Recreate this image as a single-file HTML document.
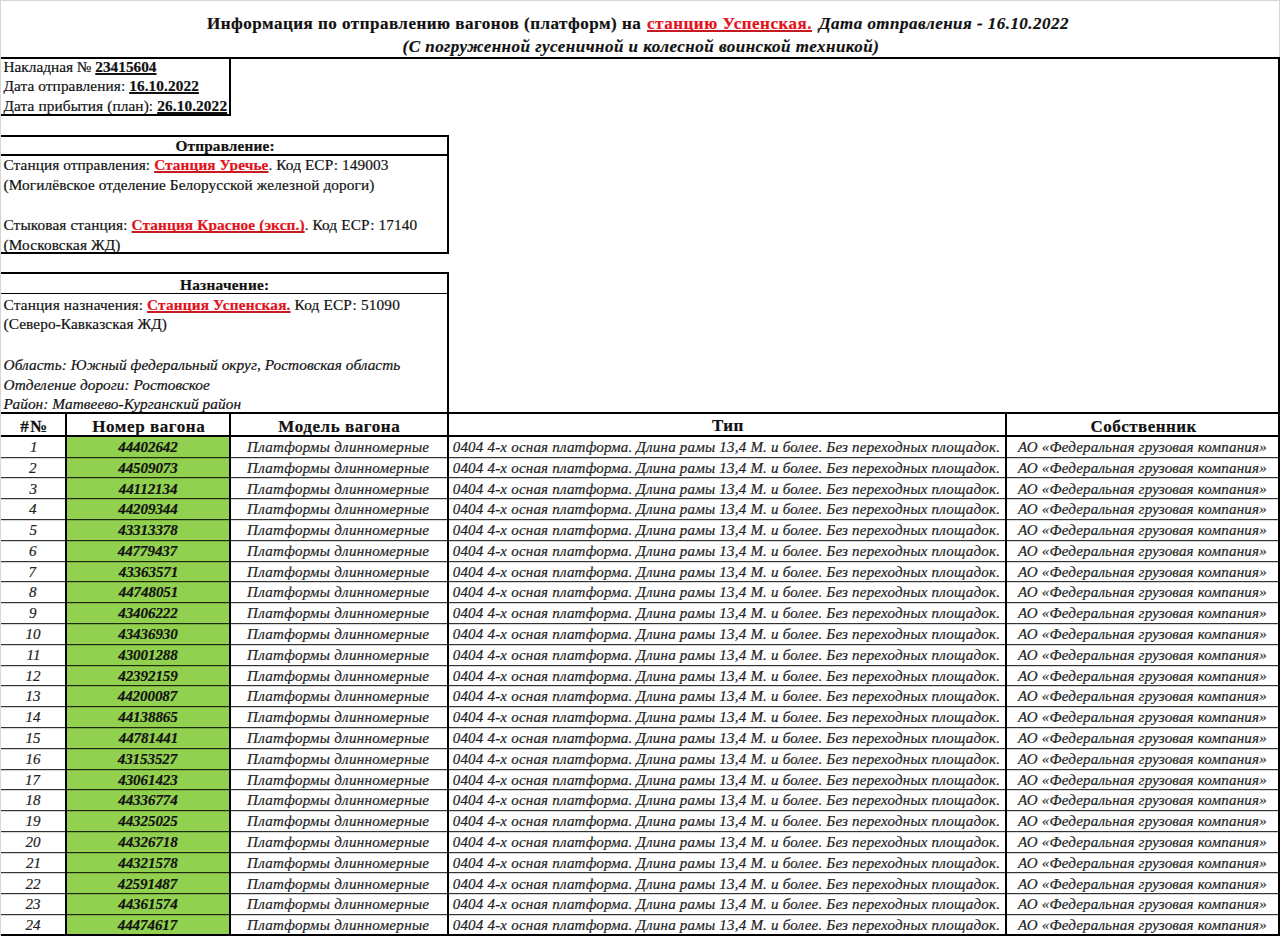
<!DOCTYPE html>
<html><head><meta charset="utf-8"><style>
html,body{margin:0;padding:0;background:#fff;}
body{width:1280px;height:936px;position:relative;overflow:hidden;}

.t{position:absolute;white-space:nowrap;font-family:"Liberation Serif",serif;line-height:1;transform-origin:0 0;-webkit-text-stroke:0.2px currentColor;}
.r{color:#e3121b;font-weight:bold;text-decoration:underline;text-decoration-color:#c41a20;text-decoration-thickness:1.5px;text-underline-offset:0.6px;text-decoration-skip-ink:none;}
.u{text-decoration:underline;text-decoration-thickness:1.5px;text-underline-offset:0.6px;text-decoration-skip-ink:none;}

</style></head><body>
<div style="position:absolute;left:66px;top:436.40px;width:164px;height:499.60px;background:#92d050"></div>
<div style="position:absolute;left:0.00px;top:0.00px;width:1280.00px;height:1.00px;background:#d6d6d6"></div>
<div style="position:absolute;left:0.00px;top:0.00px;width:1.00px;height:936.00px;background:#d6d6d6"></div>
<div style="position:absolute;left:1279.00px;top:0.00px;width:1.00px;height:57.00px;background:#d6d6d6"></div>
<div style="position:absolute;left:1.00px;top:56.50px;width:1279.00px;height:2.00px;background:#000"></div>
<div style="position:absolute;left:1278.00px;top:57.00px;width:2.00px;height:879.00px;background:#000"></div>
<div style="position:absolute;left:228.50px;top:57.00px;width:2.00px;height:58.50px;background:#000"></div>
<div style="position:absolute;left:1.00px;top:113.50px;width:229.50px;height:2.00px;background:#000"></div>
<div style="position:absolute;left:1.00px;top:134.60px;width:448.00px;height:2.00px;background:#000"></div>
<div style="position:absolute;left:1.00px;top:154.00px;width:448.00px;height:1.60px;background:#000"></div>
<div style="position:absolute;left:447.00px;top:135.00px;width:2.00px;height:119.30px;background:#000"></div>
<div style="position:absolute;left:1.00px;top:252.30px;width:448.00px;height:2.00px;background:#000"></div>
<div style="position:absolute;left:1.00px;top:271.80px;width:448.00px;height:2.00px;background:#000"></div>
<div style="position:absolute;left:1.00px;top:292.60px;width:448.00px;height:1.60px;background:#000"></div>
<div style="position:absolute;left:447.00px;top:272.00px;width:2.00px;height:664.00px;background:#000"></div>
<div style="position:absolute;left:1.00px;top:412.30px;width:1279.00px;height:2.00px;background:#000"></div>
<div style="position:absolute;left:1.00px;top:435.40px;width:1279.00px;height:2.00px;background:#000"></div>
<div style="position:absolute;left:65.00px;top:412.30px;width:2.00px;height:523.70px;background:#000"></div>
<div style="position:absolute;left:229.00px;top:412.30px;width:2.00px;height:523.70px;background:#000"></div>
<div style="position:absolute;left:1005.00px;top:412.30px;width:2.00px;height:523.70px;background:#000"></div>
<div style="position:absolute;left:1px;top:457px;width:1279px;height:1px;background:rgba(0,0,0,0.8)"></div>
<div style="position:absolute;left:1px;top:458px;width:1279px;height:1px;background:rgba(0,0,0,0.16)"></div>
<div style="position:absolute;left:1px;top:477px;width:1279px;height:1px;background:rgba(0,0,0,0.8)"></div>
<div style="position:absolute;left:1px;top:478px;width:1279px;height:1px;background:rgba(0,0,0,0.16)"></div>
<div style="position:absolute;left:1px;top:498px;width:1279px;height:1px;background:rgba(0,0,0,0.8)"></div>
<div style="position:absolute;left:1px;top:499px;width:1279px;height:1px;background:rgba(0,0,0,0.16)"></div>
<div style="position:absolute;left:1px;top:519px;width:1279px;height:1px;background:rgba(0,0,0,0.8)"></div>
<div style="position:absolute;left:1px;top:520px;width:1279px;height:1px;background:rgba(0,0,0,0.16)"></div>
<div style="position:absolute;left:1px;top:540px;width:1279px;height:1px;background:rgba(0,0,0,0.8)"></div>
<div style="position:absolute;left:1px;top:541px;width:1279px;height:1px;background:rgba(0,0,0,0.16)"></div>
<div style="position:absolute;left:1px;top:561px;width:1279px;height:1px;background:rgba(0,0,0,0.8)"></div>
<div style="position:absolute;left:1px;top:562px;width:1279px;height:1px;background:rgba(0,0,0,0.16)"></div>
<div style="position:absolute;left:1px;top:581px;width:1279px;height:1px;background:rgba(0,0,0,0.8)"></div>
<div style="position:absolute;left:1px;top:582px;width:1279px;height:1px;background:rgba(0,0,0,0.16)"></div>
<div style="position:absolute;left:1px;top:602px;width:1279px;height:1px;background:rgba(0,0,0,0.8)"></div>
<div style="position:absolute;left:1px;top:603px;width:1279px;height:1px;background:rgba(0,0,0,0.16)"></div>
<div style="position:absolute;left:1px;top:623px;width:1279px;height:1px;background:rgba(0,0,0,0.8)"></div>
<div style="position:absolute;left:1px;top:624px;width:1279px;height:1px;background:rgba(0,0,0,0.16)"></div>
<div style="position:absolute;left:1px;top:644px;width:1279px;height:1px;background:rgba(0,0,0,0.8)"></div>
<div style="position:absolute;left:1px;top:645px;width:1279px;height:1px;background:rgba(0,0,0,0.16)"></div>
<div style="position:absolute;left:1px;top:665px;width:1279px;height:1px;background:rgba(0,0,0,0.8)"></div>
<div style="position:absolute;left:1px;top:666px;width:1279px;height:1px;background:rgba(0,0,0,0.16)"></div>
<div style="position:absolute;left:1px;top:685px;width:1279px;height:1px;background:rgba(0,0,0,0.8)"></div>
<div style="position:absolute;left:1px;top:686px;width:1279px;height:1px;background:rgba(0,0,0,0.16)"></div>
<div style="position:absolute;left:1px;top:706px;width:1279px;height:1px;background:rgba(0,0,0,0.8)"></div>
<div style="position:absolute;left:1px;top:707px;width:1279px;height:1px;background:rgba(0,0,0,0.16)"></div>
<div style="position:absolute;left:1px;top:727px;width:1279px;height:1px;background:rgba(0,0,0,0.8)"></div>
<div style="position:absolute;left:1px;top:728px;width:1279px;height:1px;background:rgba(0,0,0,0.16)"></div>
<div style="position:absolute;left:1px;top:748px;width:1279px;height:1px;background:rgba(0,0,0,0.8)"></div>
<div style="position:absolute;left:1px;top:749px;width:1279px;height:1px;background:rgba(0,0,0,0.16)"></div>
<div style="position:absolute;left:1px;top:769px;width:1279px;height:1px;background:rgba(0,0,0,0.8)"></div>
<div style="position:absolute;left:1px;top:770px;width:1279px;height:1px;background:rgba(0,0,0,0.16)"></div>
<div style="position:absolute;left:1px;top:789px;width:1279px;height:1px;background:rgba(0,0,0,0.8)"></div>
<div style="position:absolute;left:1px;top:790px;width:1279px;height:1px;background:rgba(0,0,0,0.16)"></div>
<div style="position:absolute;left:1px;top:810px;width:1279px;height:1px;background:rgba(0,0,0,0.8)"></div>
<div style="position:absolute;left:1px;top:811px;width:1279px;height:1px;background:rgba(0,0,0,0.16)"></div>
<div style="position:absolute;left:1px;top:831px;width:1279px;height:1px;background:rgba(0,0,0,0.8)"></div>
<div style="position:absolute;left:1px;top:832px;width:1279px;height:1px;background:rgba(0,0,0,0.16)"></div>
<div style="position:absolute;left:1px;top:852px;width:1279px;height:1px;background:rgba(0,0,0,0.8)"></div>
<div style="position:absolute;left:1px;top:853px;width:1279px;height:1px;background:rgba(0,0,0,0.16)"></div>
<div style="position:absolute;left:1px;top:872px;width:1279px;height:1px;background:rgba(0,0,0,0.8)"></div>
<div style="position:absolute;left:1px;top:873px;width:1279px;height:1px;background:rgba(0,0,0,0.16)"></div>
<div style="position:absolute;left:1px;top:893px;width:1279px;height:1px;background:rgba(0,0,0,0.8)"></div>
<div style="position:absolute;left:1px;top:894px;width:1279px;height:1px;background:rgba(0,0,0,0.16)"></div>
<div style="position:absolute;left:1px;top:914px;width:1279px;height:1px;background:rgba(0,0,0,0.8)"></div>
<div style="position:absolute;left:1px;top:915px;width:1279px;height:1px;background:rgba(0,0,0,0.16)"></div>
<div style="position:absolute;left:1.00px;top:934.00px;width:1279.00px;height:2.00px;background:#000"></div>
<div class="t" style="left:207.00px;top:14.76px;font-size:17px;color:#111;font-weight:bold;letter-spacing:0.500px;">Информация по отправлению вагонов (платформ) на</div>
<div class="t" style="left:647.00px;top:14.76px;font-size:17px;color:#111;font-weight:bold;letter-spacing:0.529px;"><span class="r">станцию Успенская.</span></div>
<div class="t" style="left:819.00px;top:14.76px;font-size:17px;color:#111;font-weight:bold;font-style:italic;letter-spacing:0.464px;">Дата отправления - 16.10.2022</div>
<div class="t" style="left:402.50px;top:37.76px;font-size:17px;color:#111;font-weight:bold;font-style:italic;letter-spacing:0.481px;">(С погруженной гусеничной и колесной воинской техникой)</div>
<div class="t" style="left:3.50px;top:58.69px;font-size:15.3px;color:#111;letter-spacing:0.005px;">Накладная № <b class="u">23415604</b></div>
<div class="t" style="left:3.50px;top:78.19px;font-size:15.3px;color:#111;letter-spacing:0.093px;">Дата отправления: <b class="u">16.10.2022</b></div>
<div class="t" style="left:3.50px;top:98.49px;font-size:15.3px;color:#111;letter-spacing:0.113px;">Дата прибытия (план): <b class="u">26.10.2022</b></div>
<div class="t" style="left:175.40px;top:138.19px;font-size:15.3px;color:#111;font-weight:bold;letter-spacing:0.173px;">Отправление:</div>
<div class="t" style="left:3.50px;top:157.29px;font-size:15.3px;color:#111;letter-spacing:0.088px;">Станция отправления: <b class="r">Станция Уречье</b>. Код ЕСР: 149003</div>
<div class="t" style="left:3.60px;top:176.59px;font-size:15.3px;color:#111;letter-spacing:0.103px;">(Могилёвское отделение Белорусской железной дороги)</div>
<div class="t" style="left:3.50px;top:216.59px;font-size:15.3px;color:#111;letter-spacing:0.111px;">Стыковая станция: <b class="r">Станция Красное (эксп.)</b>. Код ЕСР: 17140</div>
<div class="t" style="left:3.60px;top:236.59px;font-size:15.3px;color:#111;letter-spacing:0.100px;">(Московская ЖД)</div>
<div class="t" style="left:180.00px;top:276.69px;font-size:15.3px;color:#111;font-weight:bold;letter-spacing:0.270px;">Назначение:</div>
<div class="t" style="left:3.50px;top:296.94px;font-size:15.3px;color:#111;letter-spacing:0.158px;">Станция назначения: <b class="r">Станция Успенская.</b> Код ЕСР: 51090</div>
<div class="t" style="left:3.60px;top:315.94px;font-size:15.3px;color:#111;letter-spacing:0.081px;">(Северо-Кавказская ЖД)</div>
<div class="t" style="left:3.60px;top:356.59px;font-size:15.3px;color:#111;font-style:italic;letter-spacing:0.059px;">Область: Южный федеральный округ, Ростовская область</div>
<div class="t" style="left:3.60px;top:376.59px;font-size:15.3px;color:#111;font-style:italic;letter-spacing:0.026px;">Отделение дороги: Ростовское</div>
<div class="t" style="left:3.60px;top:396.29px;font-size:15.3px;color:#111;font-style:italic;letter-spacing:0.081px;">Район: Матвеево-Курганский район</div>
<div class="t" style="left:20.20px;top:417.76px;font-size:17px;color:#111;font-weight:bold;letter-spacing:1.400px;">#№</div>
<div class="t" style="left:92.30px;top:417.76px;font-size:17px;color:#111;font-weight:bold;letter-spacing:0.582px;">Номер вагона</div>
<div class="t" style="left:278.30px;top:417.76px;font-size:17px;color:#111;font-weight:bold;letter-spacing:0.567px;">Модель вагона</div>
<div class="t" style="left:712.00px;top:417.26px;font-size:17px;color:#111;font-weight:bold;letter-spacing:0.450px;">Тип</div>
<div class="t" style="left:1090.60px;top:417.76px;font-size:17px;color:#111;font-weight:bold;letter-spacing:0.465px;">Собственник</div>
<div class="t" style="left:30.00px;top:439.94px;font-size:15px;color:#222;font-style:italic;">1</div>
<div class="t" style="left:118.20px;top:439.94px;font-size:15px;color:#111;font-weight:bold;font-style:italic;letter-spacing:-0.057px;">44402642</div>
<div class="t" style="left:247.00px;top:439.94px;font-size:15px;color:#222;font-style:italic;letter-spacing:0.310px;">Платформы длинномерные</div>
<div class="t" style="left:452.70px;top:439.94px;font-size:15px;color:#222;font-style:italic;letter-spacing:0.206px;">0404 4-х осная платформа. Длина рамы 13,4 М. и более. Без переходных площадок.</div>
<div class="t" style="left:1018.00px;top:439.94px;font-size:15px;color:#222;font-style:italic;letter-spacing:0.194px;">АО «Федеральная грузовая компания»</div>
<div class="t" style="left:29.00px;top:460.73px;font-size:15px;color:#222;font-style:italic;">2</div>
<div class="t" style="left:118.20px;top:460.73px;font-size:15px;color:#111;font-weight:bold;font-style:italic;letter-spacing:-0.057px;">44509073</div>
<div class="t" style="left:247.00px;top:460.73px;font-size:15px;color:#222;font-style:italic;letter-spacing:0.310px;">Платформы длинномерные</div>
<div class="t" style="left:452.70px;top:460.73px;font-size:15px;color:#222;font-style:italic;letter-spacing:0.206px;">0404 4-х осная платформа. Длина рамы 13,4 М. и более. Без переходных площадок.</div>
<div class="t" style="left:1018.00px;top:460.73px;font-size:15px;color:#222;font-style:italic;letter-spacing:0.194px;">АО «Федеральная грузовая компания»</div>
<div class="t" style="left:29.50px;top:481.52px;font-size:15px;color:#222;font-style:italic;">3</div>
<div class="t" style="left:118.70px;top:481.52px;font-size:15px;color:#111;font-weight:bold;font-style:italic;letter-spacing:-0.057px;">44112134</div>
<div class="t" style="left:247.00px;top:481.52px;font-size:15px;color:#222;font-style:italic;letter-spacing:0.310px;">Платформы длинномерные</div>
<div class="t" style="left:452.70px;top:481.52px;font-size:15px;color:#222;font-style:italic;letter-spacing:0.206px;">0404 4-х осная платформа. Длина рамы 13,4 М. и более. Без переходных площадок.</div>
<div class="t" style="left:1018.00px;top:481.52px;font-size:15px;color:#222;font-style:italic;letter-spacing:0.194px;">АО «Федеральная грузовая компания»</div>
<div class="t" style="left:29.00px;top:502.31px;font-size:15px;color:#222;font-style:italic;">4</div>
<div class="t" style="left:118.20px;top:502.31px;font-size:15px;color:#111;font-weight:bold;font-style:italic;letter-spacing:-0.057px;">44209344</div>
<div class="t" style="left:247.00px;top:502.31px;font-size:15px;color:#222;font-style:italic;letter-spacing:0.310px;">Платформы длинномерные</div>
<div class="t" style="left:452.70px;top:502.31px;font-size:15px;color:#222;font-style:italic;letter-spacing:0.206px;">0404 4-х осная платформа. Длина рамы 13,4 М. и более. Без переходных площадок.</div>
<div class="t" style="left:1018.00px;top:502.31px;font-size:15px;color:#222;font-style:italic;letter-spacing:0.194px;">АО «Федеральная грузовая компания»</div>
<div class="t" style="left:29.50px;top:523.10px;font-size:15px;color:#222;font-style:italic;">5</div>
<div class="t" style="left:118.20px;top:523.10px;font-size:15px;color:#111;font-weight:bold;font-style:italic;letter-spacing:-0.057px;">43313378</div>
<div class="t" style="left:247.00px;top:523.10px;font-size:15px;color:#222;font-style:italic;letter-spacing:0.310px;">Платформы длинномерные</div>
<div class="t" style="left:452.70px;top:523.10px;font-size:15px;color:#222;font-style:italic;letter-spacing:0.206px;">0404 4-х осная платформа. Длина рамы 13,4 М. и более. Без переходных площадок.</div>
<div class="t" style="left:1018.00px;top:523.10px;font-size:15px;color:#222;font-style:italic;letter-spacing:0.194px;">АО «Федеральная грузовая компания»</div>
<div class="t" style="left:29.00px;top:543.89px;font-size:15px;color:#222;font-style:italic;">6</div>
<div class="t" style="left:117.70px;top:543.89px;font-size:15px;color:#111;font-weight:bold;font-style:italic;letter-spacing:-0.057px;">44779437</div>
<div class="t" style="left:247.00px;top:543.89px;font-size:15px;color:#222;font-style:italic;letter-spacing:0.310px;">Платформы длинномерные</div>
<div class="t" style="left:452.70px;top:543.89px;font-size:15px;color:#222;font-style:italic;letter-spacing:0.206px;">0404 4-х осная платформа. Длина рамы 13,4 М. и более. Без переходных площадок.</div>
<div class="t" style="left:1018.00px;top:543.89px;font-size:15px;color:#222;font-style:italic;letter-spacing:0.194px;">АО «Федеральная грузовая компания»</div>
<div class="t" style="left:28.50px;top:564.68px;font-size:15px;color:#222;font-style:italic;">7</div>
<div class="t" style="left:118.70px;top:564.68px;font-size:15px;color:#111;font-weight:bold;font-style:italic;letter-spacing:-0.057px;">43363571</div>
<div class="t" style="left:247.00px;top:564.68px;font-size:15px;color:#222;font-style:italic;letter-spacing:0.310px;">Платформы длинномерные</div>
<div class="t" style="left:452.70px;top:564.68px;font-size:15px;color:#222;font-style:italic;letter-spacing:0.206px;">0404 4-х осная платформа. Длина рамы 13,4 М. и более. Без переходных площадок.</div>
<div class="t" style="left:1018.00px;top:564.68px;font-size:15px;color:#222;font-style:italic;letter-spacing:0.194px;">АО «Федеральная грузовая компания»</div>
<div class="t" style="left:29.00px;top:585.47px;font-size:15px;color:#222;font-style:italic;">8</div>
<div class="t" style="left:118.70px;top:585.47px;font-size:15px;color:#111;font-weight:bold;font-style:italic;letter-spacing:-0.057px;">44748051</div>
<div class="t" style="left:247.00px;top:585.47px;font-size:15px;color:#222;font-style:italic;letter-spacing:0.310px;">Платформы длинномерные</div>
<div class="t" style="left:452.70px;top:585.47px;font-size:15px;color:#222;font-style:italic;letter-spacing:0.206px;">0404 4-х осная платформа. Длина рамы 13,4 М. и более. Без переходных площадок.</div>
<div class="t" style="left:1018.00px;top:585.47px;font-size:15px;color:#222;font-style:italic;letter-spacing:0.194px;">АО «Федеральная грузовая компания»</div>
<div class="t" style="left:29.00px;top:606.26px;font-size:15px;color:#222;font-style:italic;">9</div>
<div class="t" style="left:118.20px;top:606.26px;font-size:15px;color:#111;font-weight:bold;font-style:italic;letter-spacing:-0.057px;">43406222</div>
<div class="t" style="left:247.00px;top:606.26px;font-size:15px;color:#222;font-style:italic;letter-spacing:0.310px;">Платформы длинномерные</div>
<div class="t" style="left:452.70px;top:606.26px;font-size:15px;color:#222;font-style:italic;letter-spacing:0.206px;">0404 4-х осная платформа. Длина рамы 13,4 М. и более. Без переходных площадок.</div>
<div class="t" style="left:1018.00px;top:606.26px;font-size:15px;color:#222;font-style:italic;letter-spacing:0.194px;">АО «Федеральная грузовая компания»</div>
<div class="t" style="left:25.50px;top:627.05px;font-size:15px;color:#222;font-style:italic;">10</div>
<div class="t" style="left:118.20px;top:627.05px;font-size:15px;color:#111;font-weight:bold;font-style:italic;letter-spacing:-0.057px;">43436930</div>
<div class="t" style="left:247.00px;top:627.05px;font-size:15px;color:#222;font-style:italic;letter-spacing:0.310px;">Платформы длинномерные</div>
<div class="t" style="left:452.70px;top:627.05px;font-size:15px;color:#222;font-style:italic;letter-spacing:0.206px;">0404 4-х осная платформа. Длина рамы 13,4 М. и более. Без переходных площадок.</div>
<div class="t" style="left:1018.00px;top:627.05px;font-size:15px;color:#222;font-style:italic;letter-spacing:0.194px;">АО «Федеральная грузовая компания»</div>
<div class="t" style="left:26.50px;top:647.84px;font-size:15px;color:#222;font-style:italic;">11</div>
<div class="t" style="left:118.20px;top:647.84px;font-size:15px;color:#111;font-weight:bold;font-style:italic;letter-spacing:-0.057px;">43001288</div>
<div class="t" style="left:247.00px;top:647.84px;font-size:15px;color:#222;font-style:italic;letter-spacing:0.310px;">Платформы длинномерные</div>
<div class="t" style="left:452.70px;top:647.84px;font-size:15px;color:#222;font-style:italic;letter-spacing:0.206px;">0404 4-х осная платформа. Длина рамы 13,4 М. и более. Без переходных площадок.</div>
<div class="t" style="left:1018.00px;top:647.84px;font-size:15px;color:#222;font-style:italic;letter-spacing:0.194px;">АО «Федеральная грузовая компания»</div>
<div class="t" style="left:25.50px;top:668.63px;font-size:15px;color:#222;font-style:italic;">12</div>
<div class="t" style="left:118.20px;top:668.63px;font-size:15px;color:#111;font-weight:bold;font-style:italic;letter-spacing:-0.057px;">42392159</div>
<div class="t" style="left:247.00px;top:668.63px;font-size:15px;color:#222;font-style:italic;letter-spacing:0.310px;">Платформы длинномерные</div>
<div class="t" style="left:452.70px;top:668.63px;font-size:15px;color:#222;font-style:italic;letter-spacing:0.206px;">0404 4-х осная платформа. Длина рамы 13,4 М. и более. Без переходных площадок.</div>
<div class="t" style="left:1018.00px;top:668.63px;font-size:15px;color:#222;font-style:italic;letter-spacing:0.194px;">АО «Федеральная грузовая компания»</div>
<div class="t" style="left:25.50px;top:689.42px;font-size:15px;color:#222;font-style:italic;">13</div>
<div class="t" style="left:117.70px;top:689.42px;font-size:15px;color:#111;font-weight:bold;font-style:italic;letter-spacing:-0.057px;">44200087</div>
<div class="t" style="left:247.00px;top:689.42px;font-size:15px;color:#222;font-style:italic;letter-spacing:0.310px;">Платформы длинномерные</div>
<div class="t" style="left:452.70px;top:689.42px;font-size:15px;color:#222;font-style:italic;letter-spacing:0.206px;">0404 4-х осная платформа. Длина рамы 13,4 М. и более. Без переходных площадок.</div>
<div class="t" style="left:1018.00px;top:689.42px;font-size:15px;color:#222;font-style:italic;letter-spacing:0.194px;">АО «Федеральная грузовая компания»</div>
<div class="t" style="left:25.50px;top:710.21px;font-size:15px;color:#222;font-style:italic;">14</div>
<div class="t" style="left:118.20px;top:710.21px;font-size:15px;color:#111;font-weight:bold;font-style:italic;letter-spacing:-0.057px;">44138865</div>
<div class="t" style="left:247.00px;top:710.21px;font-size:15px;color:#222;font-style:italic;letter-spacing:0.310px;">Платформы длинномерные</div>
<div class="t" style="left:452.70px;top:710.21px;font-size:15px;color:#222;font-style:italic;letter-spacing:0.206px;">0404 4-х осная платформа. Длина рамы 13,4 М. и более. Без переходных площадок.</div>
<div class="t" style="left:1018.00px;top:710.21px;font-size:15px;color:#222;font-style:italic;letter-spacing:0.194px;">АО «Федеральная грузовая компания»</div>
<div class="t" style="left:25.50px;top:731.00px;font-size:15px;color:#222;font-style:italic;">15</div>
<div class="t" style="left:118.70px;top:731.00px;font-size:15px;color:#111;font-weight:bold;font-style:italic;letter-spacing:-0.057px;">44781441</div>
<div class="t" style="left:247.00px;top:731.00px;font-size:15px;color:#222;font-style:italic;letter-spacing:0.310px;">Платформы длинномерные</div>
<div class="t" style="left:452.70px;top:731.00px;font-size:15px;color:#222;font-style:italic;letter-spacing:0.206px;">0404 4-х осная платформа. Длина рамы 13,4 М. и более. Без переходных площадок.</div>
<div class="t" style="left:1018.00px;top:731.00px;font-size:15px;color:#222;font-style:italic;letter-spacing:0.194px;">АО «Федеральная грузовая компания»</div>
<div class="t" style="left:25.50px;top:751.79px;font-size:15px;color:#222;font-style:italic;">16</div>
<div class="t" style="left:117.70px;top:751.79px;font-size:15px;color:#111;font-weight:bold;font-style:italic;letter-spacing:-0.057px;">43153527</div>
<div class="t" style="left:247.00px;top:751.79px;font-size:15px;color:#222;font-style:italic;letter-spacing:0.310px;">Платформы длинномерные</div>
<div class="t" style="left:452.70px;top:751.79px;font-size:15px;color:#222;font-style:italic;letter-spacing:0.206px;">0404 4-х осная платформа. Длина рамы 13,4 М. и более. Без переходных площадок.</div>
<div class="t" style="left:1018.00px;top:751.79px;font-size:15px;color:#222;font-style:italic;letter-spacing:0.194px;">АО «Федеральная грузовая компания»</div>
<div class="t" style="left:25.00px;top:772.58px;font-size:15px;color:#222;font-style:italic;">17</div>
<div class="t" style="left:118.20px;top:772.58px;font-size:15px;color:#111;font-weight:bold;font-style:italic;letter-spacing:-0.057px;">43061423</div>
<div class="t" style="left:247.00px;top:772.58px;font-size:15px;color:#222;font-style:italic;letter-spacing:0.310px;">Платформы длинномерные</div>
<div class="t" style="left:452.70px;top:772.58px;font-size:15px;color:#222;font-style:italic;letter-spacing:0.206px;">0404 4-х осная платформа. Длина рамы 13,4 М. и более. Без переходных площадок.</div>
<div class="t" style="left:1018.00px;top:772.58px;font-size:15px;color:#222;font-style:italic;letter-spacing:0.194px;">АО «Федеральная грузовая компания»</div>
<div class="t" style="left:25.50px;top:793.37px;font-size:15px;color:#222;font-style:italic;">18</div>
<div class="t" style="left:118.20px;top:793.37px;font-size:15px;color:#111;font-weight:bold;font-style:italic;letter-spacing:-0.057px;">44336774</div>
<div class="t" style="left:247.00px;top:793.37px;font-size:15px;color:#222;font-style:italic;letter-spacing:0.310px;">Платформы длинномерные</div>
<div class="t" style="left:452.70px;top:793.37px;font-size:15px;color:#222;font-style:italic;letter-spacing:0.206px;">0404 4-х осная платформа. Длина рамы 13,4 М. и более. Без переходных площадок.</div>
<div class="t" style="left:1018.00px;top:793.37px;font-size:15px;color:#222;font-style:italic;letter-spacing:0.194px;">АО «Федеральная грузовая компания»</div>
<div class="t" style="left:25.50px;top:814.16px;font-size:15px;color:#222;font-style:italic;">19</div>
<div class="t" style="left:118.20px;top:814.16px;font-size:15px;color:#111;font-weight:bold;font-style:italic;letter-spacing:-0.057px;">44325025</div>
<div class="t" style="left:247.00px;top:814.16px;font-size:15px;color:#222;font-style:italic;letter-spacing:0.310px;">Платформы длинномерные</div>
<div class="t" style="left:452.70px;top:814.16px;font-size:15px;color:#222;font-style:italic;letter-spacing:0.206px;">0404 4-х осная платформа. Длина рамы 13,4 М. и более. Без переходных площадок.</div>
<div class="t" style="left:1018.00px;top:814.16px;font-size:15px;color:#222;font-style:italic;letter-spacing:0.194px;">АО «Федеральная грузовая компания»</div>
<div class="t" style="left:25.50px;top:834.95px;font-size:15px;color:#222;font-style:italic;">20</div>
<div class="t" style="left:118.20px;top:834.95px;font-size:15px;color:#111;font-weight:bold;font-style:italic;letter-spacing:-0.057px;">44326718</div>
<div class="t" style="left:247.00px;top:834.95px;font-size:15px;color:#222;font-style:italic;letter-spacing:0.310px;">Платформы длинномерные</div>
<div class="t" style="left:452.70px;top:834.95px;font-size:15px;color:#222;font-style:italic;letter-spacing:0.206px;">0404 4-х осная платформа. Длина рамы 13,4 М. и более. Без переходных площадок.</div>
<div class="t" style="left:1018.00px;top:834.95px;font-size:15px;color:#222;font-style:italic;letter-spacing:0.194px;">АО «Федеральная грузовая компания»</div>
<div class="t" style="left:26.00px;top:855.74px;font-size:15px;color:#222;font-style:italic;">21</div>
<div class="t" style="left:118.20px;top:855.74px;font-size:15px;color:#111;font-weight:bold;font-style:italic;letter-spacing:-0.057px;">44321578</div>
<div class="t" style="left:247.00px;top:855.74px;font-size:15px;color:#222;font-style:italic;letter-spacing:0.310px;">Платформы длинномерные</div>
<div class="t" style="left:452.70px;top:855.74px;font-size:15px;color:#222;font-style:italic;letter-spacing:0.206px;">0404 4-х осная платформа. Длина рамы 13,4 М. и более. Без переходных площадок.</div>
<div class="t" style="left:1018.00px;top:855.74px;font-size:15px;color:#222;font-style:italic;letter-spacing:0.194px;">АО «Федеральная грузовая компания»</div>
<div class="t" style="left:25.50px;top:876.53px;font-size:15px;color:#222;font-style:italic;">22</div>
<div class="t" style="left:117.70px;top:876.53px;font-size:15px;color:#111;font-weight:bold;font-style:italic;letter-spacing:-0.057px;">42591487</div>
<div class="t" style="left:247.00px;top:876.53px;font-size:15px;color:#222;font-style:italic;letter-spacing:0.310px;">Платформы длинномерные</div>
<div class="t" style="left:452.70px;top:876.53px;font-size:15px;color:#222;font-style:italic;letter-spacing:0.206px;">0404 4-х осная платформа. Длина рамы 13,4 М. и более. Без переходных площадок.</div>
<div class="t" style="left:1018.00px;top:876.53px;font-size:15px;color:#222;font-style:italic;letter-spacing:0.194px;">АО «Федеральная грузовая компания»</div>
<div class="t" style="left:25.50px;top:897.32px;font-size:15px;color:#222;font-style:italic;">23</div>
<div class="t" style="left:118.20px;top:897.32px;font-size:15px;color:#111;font-weight:bold;font-style:italic;letter-spacing:-0.057px;">44361574</div>
<div class="t" style="left:247.00px;top:897.32px;font-size:15px;color:#222;font-style:italic;letter-spacing:0.310px;">Платформы длинномерные</div>
<div class="t" style="left:452.70px;top:897.32px;font-size:15px;color:#222;font-style:italic;letter-spacing:0.206px;">0404 4-х осная платформа. Длина рамы 13,4 М. и более. Без переходных площадок.</div>
<div class="t" style="left:1018.00px;top:897.32px;font-size:15px;color:#222;font-style:italic;letter-spacing:0.194px;">АО «Федеральная грузовая компания»</div>
<div class="t" style="left:25.50px;top:918.11px;font-size:15px;color:#222;font-style:italic;">24</div>
<div class="t" style="left:117.70px;top:918.11px;font-size:15px;color:#111;font-weight:bold;font-style:italic;letter-spacing:-0.057px;">44474617</div>
<div class="t" style="left:247.00px;top:918.11px;font-size:15px;color:#222;font-style:italic;letter-spacing:0.310px;">Платформы длинномерные</div>
<div class="t" style="left:452.70px;top:918.11px;font-size:15px;color:#222;font-style:italic;letter-spacing:0.206px;">0404 4-х осная платформа. Длина рамы 13,4 М. и более. Без переходных площадок.</div>
<div class="t" style="left:1018.00px;top:918.11px;font-size:15px;color:#222;font-style:italic;letter-spacing:0.194px;">АО «Федеральная грузовая компания»</div>
</body></html>
